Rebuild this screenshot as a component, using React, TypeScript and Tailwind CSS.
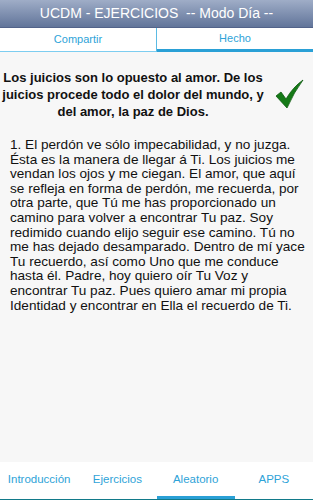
const LINES = [
  '1. El perdón ve sólo impecabilidad, y no juzga.',
  'Ésta es la manera de llegar á Ti. Los juicios me',
  'vendan los ojos y me ciegan. El amor, que aquí',
  'se refleja en forma de perdón, me recuerda, por',
  'otra parte, que Tú me has proporcionado un',
  'camino para volver a encontrar Tu paz. Soy',
  'redimido cuando elijo seguir ese camino. Tú no',
  'me has dejado desamparado. Dentro de mí yace',
  'Tu recuerdo, así como Uno que me conduce',
  'hasta él. Padre, hoy quiero oír Tu Voz y',
  'encontrar Tu paz. Pues quiero amar mi propia',
  'Identidad y encontrar en Ella el recuerdo de Ti.',
]

export default function App() {
  const tabs = ['Introducción', 'Ejercicios', 'Aleatorio', 'APPS']
  return (
    <div className="w-[313px] h-[500px] flex flex-col bg-[#f7f7f7] overflow-hidden" style={{ fontFamily: '"Liberation Sans", Arial, sans-serif' }}>
      {/* header */}
      <div className="h-[28px] shrink-0 flex items-center justify-center bg-gradient-to-b from-[#9fadc7] to-[#62759a] border-b border-[#52638a]">
        <span className="text-white text-[14px] whitespace-pre">UCDM - EJERCICIOS  -- Modo Día --</span>
      </div>
      {/* top tabs */}
      <div className="h-[24px] shrink-0 flex bg-white">
        <div className="flex-1 flex items-center justify-center text-[11px] text-[#2ea3d8] border-b border-[#7dcdf0] border-r border-r-[#5bbbe4]">Compartir</div>
        <div className="flex-1 flex items-center justify-center text-[11px] text-[#2ea3d8] border-b-[3px] border-[#2aa0d6]">Hecho</div>
      </div>
      {/* content */}
      <div className="flex-1 flex flex-col">
        <div className="flex items-center pt-[17px]">
          <p className="w-[266px] text-center font-bold text-[13px] leading-[17px] text-[#111]">
            Los juicios son lo opuesto al amor. De los juicios procede todo el dolor del mundo, y del amor, la paz de Dios.
          </p>
          <svg width="30" height="30" viewBox="0 0 30 30" className="ml-[8px] mt-[-2px]">
            <path d="M2 17 L7 13 L12 20 Q19 8 29 1 Q20 13 13 29 Z" fill="#157a17" stroke="#0d5a0f" strokeWidth="0.8" strokeLinejoin="round" />
          </svg>
        </div>
        <div className="px-[10px] mt-[18px] text-[13.6px] leading-[14.6px] text-[#111]">
          {LINES.map(l => (
            <div key={l} className="whitespace-nowrap">{l}</div>
          ))}
        </div>
      </div>
      {/* bottom tabs */}
      <div className="h-[38px] shrink-0 flex bg-white border-b border-[#127a8a]">
        {tabs.map((t, i) => (
          <div key={t} className={'flex-1 flex items-center justify-center pt-[2px] text-[11.5px] text-[#2ea3d8] ' + (i === 2 ? 'border-b-[3px] border-[#2aa0d6]' : 'border-b-[3px] border-transparent')}>
            {t}
          </div>
        ))}
      </div>
    </div>
  )
}
